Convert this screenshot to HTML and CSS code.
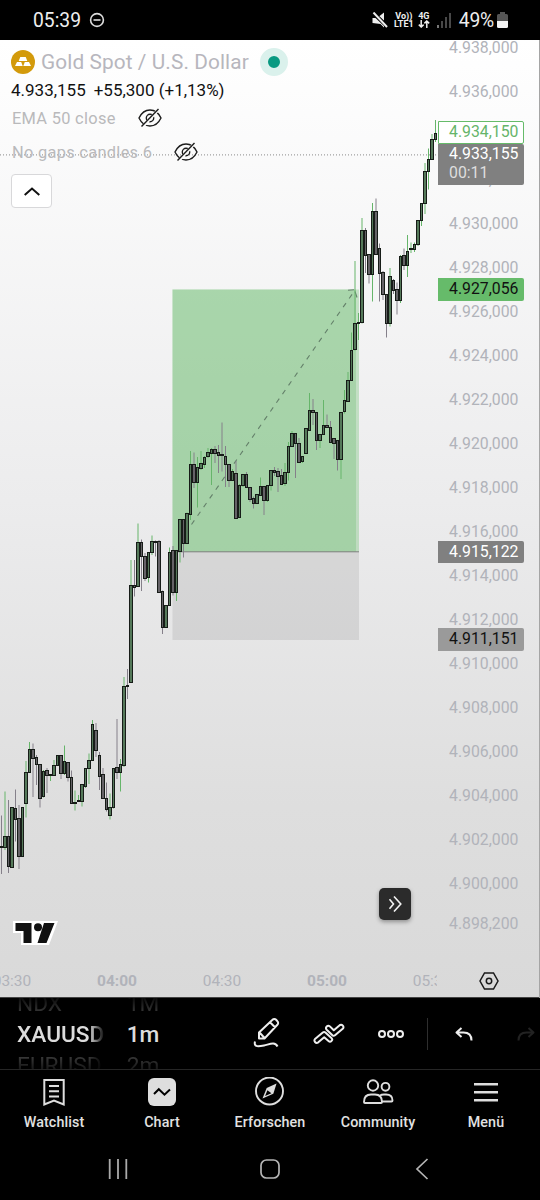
FILE: index.html
```
<!DOCTYPE html>
<html lang="de">
<head>
  <meta charset="UTF-8" />
  <meta name="viewport" content="width=device-width, initial-scale=1.0"/>
  <title>XAUUSD 1m</title>
  <link rel="stylesheet" href="styles.css">
</head>
<body>

  <header class="status-bar">
    <span class="clock">05:39</span>
    <svg class="dnd" width="16" height="16" viewBox="0 0 16 16" fill="none" stroke="#ddd" stroke-width="1.6"><circle cx="8" cy="8" r="6.4"/><path d="M4.5 8h7"/></svg>
    <div class="status-right">
      <svg class="mute" width="16" height="16" viewBox="0 0 16 16"><path d="M0.500 6h4.500l7-5.500v15L8.500 12 0.500 11z" fill="#eee"/><path d="M0 0l16 15" stroke="#000" stroke-width="4"/><path d="M1.500 0.500l13.500 14.500" stroke="#eee" stroke-width="2"/></svg>
      <div class="net"><span>Vo))</span><span>LTE1</span></div>
      <div class="net net-4g"><span>4G</span>
        <svg width="12" height="8" viewBox="0 0 12 8" fill="none" stroke="#eee" stroke-width="1.5"><path d="M3.2 0v7M.8 4.6l2.4 2.4 2.4-2.4M8.8 8V1M6.4 3.4L8.8 1l2.4 2.4"/></svg>
      </div>
      <svg class="signal" width="14" height="15" viewBox="0 0 14 15" fill="#484848"><rect x="0" y="12" width="2" height="3" fill="#777"/><rect x="4" y="8" width="2" height="7"/><rect x="8" y="4" width="2" height="11"/><rect x="12" y="0" width="2" height="15"/></svg>
      <span class="battery-text">49%</span>
      <svg class="battery" width="11" height="16" viewBox="0 0 11 16"><path d="M3 0h5v2h1.500a1.500 1.500 0 0 1 1.500 1.500V9H0V3.500A1.500 1.500 0 0 1 1.500 2H3z" fill="#555"/><path d="M0 9h11v5.500a1.500 1.500 0 0 1-1.500 1.500h-8A1.500 1.500 0 0 1 0 14.500z" fill="#f4f4f4"/></svg>
    </div>
  </header>

  <main class="chart">
    <svg class="plot" width="540" height="958" viewBox="0 40 540 958">
      <rect x="172.500" y="289.500" width="186.500" height="262.500" class="profit"/>
      <rect x="172.500" y="289.500" width="183.500" height="262.500" class="profit-live"/>
      <rect x="172.500" y="552" width="186.500" height="88" class="stop"/>
      <path d="M172.500 551.800H359" class="entry"/>
      <path d="M191.500 524.500L353 293" class="trend"/>
      <path d="M348 290.300l6-.6M355 291.500l2 6" class="trend-head"/>
      <path d="M0 154.900H438" class="last-price"/>
      <g id="candles"></g>
    </svg>

    <section class="legend">
      <div class="symbol">
        <svg width="24" height="24" viewBox="0 0 24 24"><circle cx="12" cy="12" r="12" fill="#d39a0b"/><path d="M9.300 7h5.400l1.600 4H7.700zM6 12h4.200l1.500 4H4zM13.800 12H18l2 4h-7.700z" fill="#fff"/></svg>
        <h1>Gold Spot / U.S. Dollar</h1>
        <span class="market-open"></span>
      </div>
      <div class="quote"><span>4.933,155</span><span>+55,300 (+1,13%)</span></div>
      <div class="study">
        <span>EMA 50 close</span>
        <svg class="eye" width="24" height="20" viewBox="0 0 24 20"><path d="M1 10c2.300-4.800 6-8 11-8s8.700 3.200 11 8c-2.300 4.800-6 8-11 8S3.300 14.800 1 10z"/><circle cx="12" cy="10" r="3.700"/><path class="gap" d="M4.500 19L20.500 1.500"/><path d="M3.500 18.500L20.500 1"/></svg>
      </div>
      <div class="study study-second">
        <span>No gaps candles 6</span>
        <svg class="eye" width="24" height="20" viewBox="0 0 24 20"><path d="M1 10c2.300-4.800 6-8 11-8s8.700 3.200 11 8c-2.300 4.800-6 8-11 8S3.300 14.800 1 10z"/><circle cx="12" cy="10" r="3.700"/><path class="gap" d="M4.500 19L20.500 1.500"/><path d="M3.500 18.500L20.500 1"/></svg>
      </div>
      <button class="collapse" type="button">
        <svg width="16" height="9" viewBox="0 0 16 9" fill="none" stroke="#111" stroke-width="2"><path d="M.7 8L8 1.500 15.300 8"/></svg>
      </button>
    </section>

    <aside class="price-scale">
      <span>4.938,000</span>
      <span>4.936,000</span>
      <span></span>
      <span>4.932,000</span>
      <span>4.930,000</span>
      <span>4.928,000</span>
      <span>4.926,000</span>
      <span>4.924,000</span>
      <span>4.922,000</span>
      <span>4.920,000</span>
      <span>4.918,000</span>
      <span>4.916,000</span>
      <span>4.914,000</span>
      <span>4.912,000</span>
      <span>4.910,000</span>
      <span>4.908,000</span>
      <span>4.906,000</span>
      <span>4.904,000</span>
      <span>4.902,000</span>
      <span>4.900,000</span>
      <span class="lowest">4.898,200</span>
    </aside>
    <div class="tag tag-high">4.934,150</div>
    <div class="tag tag-last">4.933,155<br><span>00:11</span></div>
    <div class="tag tag-target">4.927,056</div>
    <div class="tag tag-entry">4.915,122</div>
    <div class="tag tag-stop">4.911,151</div>

    <svg class="tv-logo" width="45" height="26" viewBox="0 0 45 26"><path d="M0 1h45L36 25H8V13H0z" fill="#fff"/><path d="M2.500 3H18.500V23H10.500V11H2.500zM31 3H41.500L33.500 23H24.500z" fill="#111"/><circle cx="25" cy="7.200" r="4" fill="#111"/></svg>

    <button class="jump" type="button">
      <svg width="16" height="16" viewBox="0 0 16 16" fill="none" stroke="#f2f2f2" stroke-width="1.600"><path d="M2.500 3.200l4 4.800-4 4.800M7 .5L13.800 8 7 15.500"/></svg>
    </button>

    <footer class="time-axis">
      <div class="times">
        <span>03:30</span>
        <span class="hour">04:00</span>
        <span>04:30</span>
        <span class="hour">05:00</span>
        <span>05:30</span>
      </div>
      <svg class="axis-settings" width="20" height="18" viewBox="0 0 20 18" fill="none" stroke="#1a1a1a" stroke-width="1.500"><path d="M5.500 1h9L19 9l-4.500 8h-9L1 9z"/><circle cx="10" cy="9" r="2.700"/></svg>
    </footer>
  </main>

  <section class="toolbar">
    <div class="wheel wheel-symbol">
      <span class="prev">NDX</span>
      <strong>XAUUSD</strong>
      <span class="next">EURUSD</span>
    </div>
    <div class="wheel wheel-interval">
      <span class="prev">1M</span>
      <strong>1m</strong>
      <span class="next">2m</span>
    </div>
    <div class="tools">
      <button type="button"><svg width="30" height="32" viewBox="0 0 30 32"><path d="M7 20.500v-6L20.500 1.800a2.500 2.500 0 0 1 3.600 0l1.300 1.400a2.500 2.500 0 0 1 0 3.600L12.500 20.500zM18 4.200l5 5M8 15l4.500 5M3 23.500c-1.500 6 4 5 9 4s11-4.500 13.500 1"/></svg></button>
      <button type="button"><svg width="32" height="22" viewBox="0 0 32 22"><path d="M2 16l7.800-6.500a2 2 0 0 1 2.600 0l6 5.400a2.100 2.100 0 0 1-2.900 3.200l-4.300-3.800-6.200 5.300A2.400 2.400 0 0 1 2 16zM30 5.500L22 12.200a2 2 0 0 1-2.600 0l-5.700-5.500a2.300 2.300 0 0 1 3.200-3.300l3.900 3.800L27 2a2.400 2.400 0 0 1 3 3.500z"/></svg></button>
      <button type="button"><svg width="28" height="10" viewBox="0 0 28 10"><circle cx="5" cy="5" r="3"/><circle cx="14" cy="5" r="3"/><circle cx="23" cy="5" r="3"/></svg></button>
      <i class="divider"></i>
      <button type="button"><svg width="18" height="14" viewBox="0 0 18 14"><path d="M6.500 1L1.500 5.500l5 4.500M2 5.500h6.500c5 0 8 3 8 8"/></svg></button>
      <button type="button" class="disabled"><svg width="18" height="14" viewBox="0 0 18 14"><path d="M11.500 1l5 4.500-5 4.500M16 5.500H9.500c-5 0-8 3-8 8"/></svg></button>
    </div>
  </section>

  <nav class="tabs">
    <a>
      <svg width="30" height="30" viewBox="0 0 30 30" fill="none" stroke="#dedede" stroke-width="2"><path d="M5.300 3h19.400v24.500L15 23.500l-9.700 4zM10 9h10M10 14.200h10M10 19.400h10"/></svg>
      <span>Watchlist</span>
    </a>
    <a>
      <svg width="30" height="30" viewBox="0 0 30 30"><rect x="1" y="1" width="28" height="28" rx="6" fill="#dedede"/><path d="M7 17l4.800-4.800 5.700 5.500L23 12.500" fill="none" stroke="#000" stroke-width="2"/></svg>
      <span>Chart</span>
    </a>
    <a>
      <svg width="30" height="30" viewBox="0 0 30 30"><circle cx="14.500" cy="14" r="13.500" fill="none" stroke="#dedede" stroke-width="1.900"/><path d="M21.500 6.500l-3.200 10.200-10.800 4.800 4.200-10.400z" fill="#dedede"/><path d="M12.400 13.200l4 3-6.300 2.900z" fill="#000"/></svg>
      <span>Erforschen</span>
    </a>
    <a>
      <svg width="32" height="30" viewBox="0 0 32 30" fill="none" stroke="#dedede" stroke-width="1.900"><circle cx="11" cy="8.500" r="5.200"/><circle cx="23.500" cy="9.800" r="3.900"/><path d="M2 25c0-5 3-7.500 7-7.500h4c4 0 7 2.500 7 7.500 0 .6-.4 1-1 1H3c-.6 0-1-.4-1-1zM18 18.500c1-.7 2.500-1 4-1h2c4 0 6.500 2 6.500 6 0 .8-.5 1-1 1H20"/></svg>
      <span>Community</span>
    </a>
    <a>
      <svg width="30" height="30" viewBox="0 0 30 30" stroke="#dedede" stroke-width="2.400"><path d="M3 7.300h24M3 15.300h24M3 23.300h24"/></svg>
      <span>Menü</span>
    </a>
  </nav>

  <div class="system-nav">
    <svg width="20" height="20" viewBox="0 0 20 20" stroke="#aaa" stroke-width="1.800"><path d="M1.700 0v20M10 0v20M18.300 0v20"/></svg>
    <svg width="20" height="20" viewBox="0 0 20 20" fill="none" stroke="#b5b5b5" stroke-width="1.700"><rect x="1" y="1" width="18" height="18" rx="5.500"/></svg>
    <svg width="14" height="22" viewBox="0 0 14 22" fill="none" stroke="#b5b5b5" stroke-width="1.700"><path d="M12.500 1L2 11l10.500 10"/></svg>
  </div>

  <script src="chart.js"></script>
</body>
</html>
```
FILE: styles.css
```
* {
  box-sizing: border-box;
}

body {
  width: 540px;
  height: 1200px;
  margin: 0;
  overflow: hidden;
  background: #000;
  font-family: Roboto, sans-serif;
}

h1 {
  margin: 0;
}

button {
  padding: 0;
  border: none;
  background: none;
  display: flex;
  align-items: center;
  justify-content: center;
}

svg {
  display: block;
  flex: none;
}

/* status bar */
.status-bar {
  height: 40px;
  display: flex;
  align-items: center;
  padding: 0 33px;
  color: #eee;
}

.clock {
  font-size: 19.3px;
  width: 56px;
}

.status-right {
  margin-left: auto;
  display: flex;
  align-items: center;
}

.mute {
  margin-right: 6px;
}

.net {
  width: 20px;
  margin-right: 4px;
  display: flex;
  flex-direction: column;
  align-items: center;
  font-size: 9px;
  line-height: 8.5px;
  font-weight: 700;
}

.net-4g {
  width: 12px;
  margin-right: 7px;
}

.signal {
  margin-right: 8px;
}

.battery-text {
  font-size: 19.3px;
  margin-right: 3px;
  letter-spacing: -0.2px;
}

.battery {
  margin-right: -1px;
}

/* chart */
.chart {
  position: relative;
  height: 958px;
  overflow: hidden;
  background: linear-gradient(#ffffff 0%, #ececed 48%, #dedede 80%, #d9d9d9 100%);
  border-right: 1px solid #a5a5a5;
}

.plot {
  position: absolute;
  top: 0;
  left: 0;
}

.profit {
  fill: #66bb6a;
  fill-opacity: 0.33;
}

.profit-live {
  fill: #66bb6a;
  fill-opacity: 0.3;
}

.stop {
  fill: #808080;
  fill-opacity: 0.18;
}

.entry {
  stroke: #808080;
  stroke-width: 1;
}

.trend,
.trend-head {
  stroke: #64806a;
  stroke-width: 1.1;
  fill: none;
}

.trend {
  stroke-dasharray: 5 5.6;
}

.last-price {
  stroke: #8a8a8a;
  stroke-width: 1;
  stroke-dasharray: 1 2;
}

.up .wick {
  stroke: #66b56a;
}

.down .wick {
  stroke: #85808a;
}

.body {
  stroke: #171c18;
  stroke-width: 1;
}

.up .body {
  fill: #55795a;
}

.down .body {
  fill: #656267;
}

.legend {
  position: absolute;
  top: 0;
  left: 0;
  padding: 10px 0 0 11px;
}

.symbol {
  display: flex;
  align-items: center;
  height: 24px;
}

.symbol h1 {
  margin-left: 6px;
  font-size: 20.8px;
  font-weight: 400;
  letter-spacing: 0.1px;
  color: #b7b6bd;
}

.market-open {
  width: 28px;
  height: 28px;
  margin-left: 11px;
  border-radius: 50%;
  border: 8px solid #daf1ec;
  background: #089981;
}

.quote {
  display: flex;
  gap: 8px;
  margin-top: 6px;
  font-size: 17px;
  line-height: 20px;
  color: #111;
}

.study {
  display: flex;
  align-items: center;
  height: 28px;
  margin-top: 4px;
  padding-left: 1px;
  font-size: 16.4px;
  letter-spacing: 0.3px;
  color: #b9b9bb;
}

.study-second {
  margin-top: 6px;
}

.eye {
  margin-left: 22px;
  fill: none;
  stroke: #1c1c1c;
  stroke-width: 1.4;
}

.eye .gap {
  stroke: #fcfcfc;
  stroke-width: 3;
}

.collapse {
  width: 41px;
  height: 34px;
  margin-top: 8px;
  background: #fff;
  border: 1px solid #d8d8da;
  border-radius: 4px;
}

.price-scale {
  width: 102px;
  margin-left: auto;
  display: flex;
  flex-direction: column;
  margin-top: -14px;
  padding-left: 12px;
  font-size: 15.8px;
  color: #b1b3ba;
}

.price-scale span {
  height: 44.03px;
  line-height: 44px;
}

.price-scale .lowest {
  margin-top: -4px;
}

.tag {
  position: absolute;
  left: 438px;
  width: 86px;
  height: 22px;
  padding-left: 11px;
  border-radius: 0 2px 2px 0;
  font-size: 15.8px;
  line-height: 22px;
}

.tag-high {
  top: 81px;
  height: 23px;
  line-height: 20px;
  padding-left: 10px;
  border: 1px solid #66bb6a;
  background: #fff;
  color: #66b56a;
}

.tag-last {
  top: 104px;
  height: 41px;
  padding-top: 1px;
  line-height: 18.5px;
  background: #808080;
  color: #fff;
}

.tag-last span {
  color: #dedede;
}

.tag-target {
  top: 238px;
  height: 23px;
  background: #66bb6a;
  color: #111;
}

.tag-entry {
  top: 501px;
  height: 22px;
  line-height: 21px;
  background: #808080;
  color: #fff;
}

.tag-stop {
  top: 588px;
  height: 23px;
  background: #9a9a9a;
  color: #111;
}

.tv-logo {
  position: absolute;
  left: 13px;
  top: 880px;
}

.jump {
  position: absolute;
  left: 379px;
  top: 848px;
  width: 32px;
  height: 32px;
  border-radius: 5px;
  background: #2b2b2b;
  box-shadow: 0 2px 4px rgba(0, 0, 0, 0.35);
}

.time-axis {
  position: absolute;
  left: 0;
  bottom: 0;
  width: 100%;
  height: 34px;
  display: flex;
  align-items: center;
  border-bottom: 1px solid #444;
}

.times {
  width: 437px;
  overflow: hidden;
  display: flex;
  font-size: 15.5px;
  color: #b1b3ba;
}

.times span {
  flex: none;
  width: 105px;
  text-align: center;
}

.times span:first-child {
  margin-left: -40.5px;
}

.times .hour {
  font-weight: 700;
}

.axis-settings {
  margin-left: 42px;
}

/* symbol and interval wheels with drawing tools */
.toolbar {
  height: 72px;
  display: flex;
  align-items: center;
  border-bottom: 1px solid #262626;
  overflow: hidden;
}

.wheel {
  flex: none;
  height: 71px;
  padding-top: 1px;
  overflow: hidden;
  display: flex;
  flex-direction: column;
  justify-content: center;
  font-size: 22.7px;
  line-height: 31px;
  color: #4a4a4a;
}

.wheel span,
.wheel strong {
  flex: none;
  height: 31px;
}

.wheel strong {
  font-weight: 500;
  color: #dcdcdc;
}

.wheel .prev {
  -webkit-mask-image: linear-gradient(transparent 20%, #000);
  mask-image: linear-gradient(transparent 20%, #000);
}

.wheel .next {
  -webkit-mask-image: linear-gradient(#000, transparent 90%);
  mask-image: linear-gradient(#000, transparent 90%);
}

.wheel-symbol {
  width: 88px;
  margin-left: 17px;
  -webkit-mask-image: linear-gradient(to right, #000 82%, transparent);
  mask-image: linear-gradient(to right, #000 82%, transparent);
}

.wheel-interval {
  width: 34px;
  margin-left: 21px;
  align-items: center;
}

.tools {
  flex: none;
  display: flex;
  align-items: center;
  margin-left: 76px;
}

.tools button {
  flex: none;
  width: 62px;
  height: 60px;
}

.tools svg {
  fill: none;
  stroke: #eee;
  stroke-width: 2;
  stroke-linejoin: round;
}

.tools .disabled svg {
  stroke: #222;
}

.divider {
  flex: none;
  width: 1px;
  height: 32px;
  margin: 0 5px;
  background: #2e2e2e;
}

/* bottom tabs */
.tabs {
  height: 70px;
  display: grid;
  grid-template-columns: repeat(5, 1fr);
  padding-top: 7px;
}

.tabs a {
  display: flex;
  flex-direction: column;
  align-items: center;
  gap: 7px;
  font-size: 14.3px;
  line-height: 17px;
  font-weight: 500;
  letter-spacing: 0.1px;
  color: #e2e2e2;
}

.system-nav {
  height: 58px;
  display: grid;
  grid-template-columns: repeat(3, 152px);
  padding: 0 42px;
  align-items: center;
  justify-items: center;
}
```
FILE: chart.js
```
// one entry per minute: direction, high, body top, body bottom, low
const candles = [
  ["d",815.5,847,848,874],["u",791.5,837,848,850],["d",800,837,866.5,873],["u",808,808,867.5,868],
  ["d",789.5,808.5,820,841.5],["d",805,819,856.5,869],["u",808,808,856.5,857],["u",761,773,803.5,817.5],
  ["u",742,749.5,772.5,773],["d",743.5,749.5,759,797],["d",755,758,764.5,785],["d",764,765,798.5,807.5],
  ["u",770,772,797,797.5],["d",768,771,776,793],["u",774,775,776,781],["u",760,765.5,776,776],
  ["u",755,755.5,765.5,766],["d",755,755.5,774,779],["u",745.5,762,774,775],["d",762,762.5,778,781.5],
  ["d",770.5,778,803.5,804],["u",790.5,802.5,804,810.5],["u",795,800.5,801.5,802],["u",784,785,801.5,806.5],
  ["u",768,768.5,787,788],["u",753.5,760.5,769,784],["u",720,724.5,760.5,761],["d",723,730.5,750.5,757],
  ["d",752,755.5,777,790],["d",768,774.5,798.5,799],["d",782.5,798.5,810,811.5],["u",793.5,807.5,815.5,819.5],
  ["u",768,768.5,808,808.5],["d",719,768,773,779],["u",759,765,772.5,791.5],["u",677,686.5,766,767],
  ["d",669,686,687,699],["u",560,585.5,682.5,683],["d",560,585.5,587.5,596.5],["u",523.5,542.5,587,587],
  ["d",539.5,542.5,556.5,591],["d",553,556.5,578.5,581],["u",552.5,553,578,582.5],["u",535.5,541.5,553,555],
  ["d",540.5,541.5,543,556.5],["d",540,542,592.5,593],["d",590.5,591.5,628,634],["u",605,605.5,628,628],
  ["u",547.5,553,605.5,606],["d",546,551,592.5,595.5],["u",550,551,592.5,601],["u",519,519.5,551.5,562.5],
  ["d",519,519.5,543.5,557.5],["u",512.5,513.5,544,544],["u",451,464.5,514.5,520],["d",452.5,464.5,482.5,488],
  ["u",457,468,482.5,507.5],["u",451,464,468.5,470],["u",456,458,464.5,468],["u",448,453,456.5,458],
  ["u",448,450,453.5,485],["d",446,449.5,453.5,463],["d",445,453,456,473],["d",422.5,455,456,471.5],
  ["d",446,457,464.5,487],["d",464,465,480.5,487],["u",469,472,480.5,481],["d",461,473.5,518.5,519],
  ["u",484,485.5,517.5,518],["u",474,474.5,485.5,487],["d",472,474.5,487.5,488],["d",487,487.5,500,502],
  ["d",496.5,498.5,503.5,508.5],["u",494,495,503.5,504],["u",477.5,487,495.5,496],["d",486,486.5,500.5,515],
  ["u",485,485.5,500.5,502],["u",470,470.5,485.5,490.5],["d",467,470.5,472.5,476],["d",468,471.5,477,492],
  ["d",469,476,484.5,485],["u",463,473,483.5,486],["u",442,447,472.5,480.5],["u",431,433.5,446.5,447],
  ["d",433,433.5,444,478],["d",438,444,462.5,463],["u",456,456.5,462,463],["u",428,429,453.5,454],
  ["u",393,410.5,430.5,431],["d",399,410.5,412.5,425],["d",412,413,440.5,450],["u",434,434.5,440.5,448],
  ["u",400,425.5,434.5,435],["d",414.5,425.5,427.5,428],["d",421,427.5,442.5,443],["d",438,439,443.5,459],
  ["d",440,440.5,459.5,470.5],["u",412.5,413,459.5,479],["u",390,400.5,411.5,413.5],["u",372,380.5,401.5,402],
  ["u",332.5,350.5,380.5,381],["u",261,324,350,350.5],["u",313,323,324,340],["u",218,230.5,323,323.5],
  ["d",228,231,255.5,273],["d",254,254.5,275,283.5],["u",203,211.5,275,301.5],["d",198.5,211.5,254.5,255],
  ["d",243.5,248.5,273.5,301.5],["d",271,273,295,300],["d",294,294.5,323.5,337.5],["u",268,276.5,324,326.5],
  ["d",279,280.5,290.5,294],["d",282.5,290,300.5,314.5],["u",255,256.5,300.5,303],["d",248.5,255.5,265.5,270],
  ["u",235,251.5,265.5,277],["u",242.5,249,250,253],["u",242.5,245,249.5,252],["u",220,220.5,245,246],
  ["u",203,203.5,220.5,226],["u",163,171.5,203.5,214],["u",148.5,159.5,171.5,189.5],["u",134,139.5,159.5,160],
  ["u",120,133.5,139.5,142]
];

const step = 3.5;
let markup = "";

candles.forEach(([dir, high, top, bottom, low], i) => {
  const x = 1.5 + i * step;
  const width = i % 2 ? 3 : 2;
  const y1 = Math.round(top) - 0.5;
  const y2 = Math.max(Math.round(bottom) - 0.5, y1);
  markup += `<g class="${dir === "u" ? "up" : "down"}">
    <path class="wick" d="M${x} ${high}V${low}"/>`;
  if (y2 - y1 < 1) {
    markup += `<path class="body" d="M${x - width / 2 - 0.5} ${y1}h${width + 1}"/></g>`;
  } else {
    markup += `<rect class="body" x="${x - width / 2}" y="${y1}" width="${width}" height="${y2 - y1}"/></g>`;
  }
});

document.getElementById("candles").innerHTML = markup;
```
